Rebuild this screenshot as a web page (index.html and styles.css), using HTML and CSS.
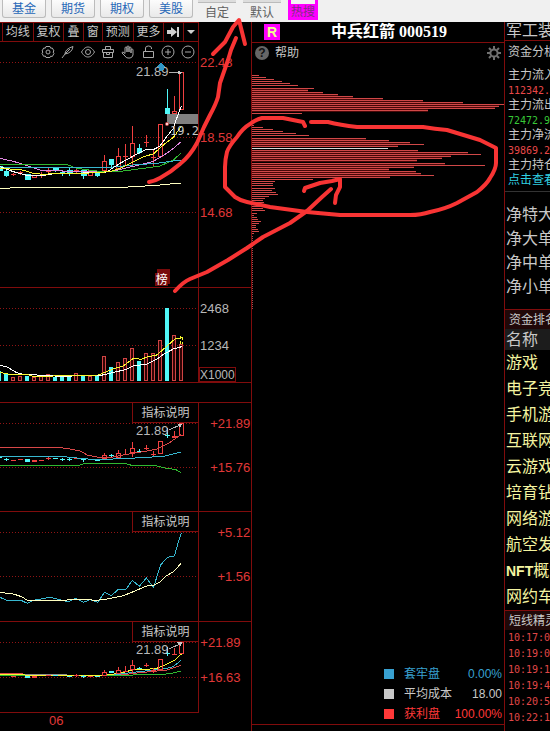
FILE: index.html
```html
<!DOCTYPE html>
<html lang="zh-CN">
<head>
<meta charset="utf-8">
<title>中兵红箭 000519</title>
<link rel="stylesheet" href="styles.css">
</head>
<body>
<nav class="topbar">
  <button class="tab">基金</button>
  <button class="tab">期货</button>
  <button class="tab">期权</button>
  <button class="tab">美股</button>
  <button class="tool">自定</button>
  <button class="tool">默认</button>
  <button class="hot">热搜</button>
</nav>
<main class="layout">
  <section class="charts">
    <div class="menu">
      <button class="wide">均线</button>
      <button class="wide">复权</button>
      <button>叠</button>
      <button>窗</button>
      <button class="wide">预测</button>
      <button class="wide">更多</button>
      <button aria-label="跳到末尾"><svg width="14" height="12" viewBox="0 0 14 12"><path d="M1 4h4V1l6 5-6 5V8H1zM11 1h2v10h-2z" fill="#d0d0d0"/></svg></button>
      <button class="drop" aria-label="展开"><svg width="8" height="5" viewBox="0 0 8 5"><path d="M0 0h8L4 4z" fill="#d0d0d0"/></svg></button>
    </div>
    <div class="icons">
      <svg viewBox="0 0 14 14"><path d="M5 1.500h4l.7 1.700 1.600-.2 1.700 3-1 1 1 1.500-1.700 3-1.700-.3L9 12.500H5l-.7-1.500-1.700.3-1.600-3L2 7 1 6l1.700-3 1.600.2z"/><circle cx="7" cy="7" r="2"/></svg>
      <svg viewBox="0 0 14 14"><path d="M1 13L4 9Q4 4 12 1.500Q11 8 4 9M4 9L9 4"/></svg>
      <svg viewBox="0 0 14 14"><path d="M.5 7C3 3 5 2 7 2s4 1 6.500 5C11 11 9 12 7 12S3 11 .5 7z"/><circle cx="7" cy="7" r="2.500"/></svg>
      <svg viewBox="0 0 14 14"><path d="M1.500 4.500h11v3h-11zM2.500 7.500v5h9v-5M4.500 4V1.500h5V4M5.500 7.500v2h3v-2"/></svg>
      <svg viewBox="0 0 14 14"><path d="M4 8.500V3q0-1 1-1t1 1v4V2q0-1 1-1t1 1v5V3q0-1 1-1t1 1v5V5q0-1 1-1t1 1v5q-1 3-3 3H7q-2 0-3-2L1 8q0-1 1-1z"/></svg>
      <svg viewBox="0 0 14 14"><path d="M2.500 6.500h10v6h-10zM4.500 6V3q0-2 3-2t3 2v1"/></svg>
      <svg viewBox="0 0 14 14"><circle cx="7" cy="7" r="6"/><path d="M4 7h6M7 4v6"/></svg>
      <svg viewBox="0 0 14 14"><circle cx="7" cy="7" r="6"/><path d="M4 7h6"/></svg>
    </div>

    <svg class="plot" viewBox="0 6 753 675">
      <path class="grid" d="M0 7H595M0 232H595M0 458H595"/>
      <path class="axis" d="M595.500 0V681"/>
      <path fill="#808080" d="M501 162h93v30h-93z"/>
      <g class="up">
        <path d="M40 338v10M33 343h14M61 333v12M54 338h14M96 347h14v6h-14zM124 336v18M117 345h14M145 324v14M139 330h13M139 333h13M229 324v14M222 331h14M264 331h14v14h-14zM264 338h14M307 303h12v29h-12zM313 285v18M349 289h12v36h-12zM355 264v25M376 252v66M369 290h14M391 250h12v40h-12zM397 198v52M397 290v25M439 225v36M432 246h14M460 268v50M453 293h14M475 193h13v97h-13zM517 154h13v6h-13zM523 108v46M538 38h13v111h-13z"/>
      </g>
      <g class="down">
        <path d="M0 320h6v12H0zM12 333h14v14H12zM75 343h15v14H75zM159 323h15v7h-15zM201 330h15v11h-15zM243 332h15v13h-15zM285 336h14v11h-14zM327 299h14v13h-14zM411 266h14v11h-14zM495 144h14v15h-14z"/>
        <path d="M19 330v20M166 330v6M187 335v13M181 338h13M208 324v23M250 330v27M292 336v14M334 296v26M418 252v30M502 87v75"/>
      </g>
      <polyline class="line pale" points="0,384 30,384 50,381 385,381 470,376 520,371 542,370"/>
      <polyline class="line violet" points="0,295 40,304 85,318 120,330 160,332 240,335 330,336 370,326 430,312 460,304 500,280 520,265 542,246"/>
      <polyline class="line green" points="0,313 200,313 230,325 290,333 370,333 430,325 480,318 520,300 542,280"/>
      <polyline class="line blue" points="0,322 330,322 400,315 470,310 542,300"/>
      <polyline class="line white" points="0,320 40,335 80,346 130,346 170,340 250,339 320,336 360,310 400,288 440,268 462,268 480,258 500,230 520,205 530,175 544,138"/>
      <polyline class="line yellow" points="0,326 60,328 100,340 130,343 170,340 250,340 330,335 360,325 390,310 430,290 460,282 490,255 520,232 545,198"/>
      <circle cx="501" cy="192" r="5" fill="#ffd0d0" stroke="#c03030" stroke-width="2"/>
      <text class="num gray" x="408" y="47">21.89</text>
      <path class="pointer" d="M508 38h30"/><path fill="#c8c8c8" d="M534 32l14 6-14 6z"/>
      <path fill="#3098c8" d="M484 8l13 13-6 1v7l-7 5-7-5v-7l-6-1z"/>
      <text class="mono" x="510" y="226">19.2</text>
      <text class="num red" x="600" y="21">22.48</text>
      <text class="num red" x="600" y="246">18.58</text>
      <text class="num red" x="600" y="472">14.68</text>
      <path fill="#780a0a" d="M471 627h39v45h-6v6h-39v-39h6z"/>
      <text class="cjk" x="467" y="672">榜</text>
    </svg>

    <div class="panel volume">
      <svg class="plot" viewBox="0 84 753 282">
        <path class="grid" d="M0 146H595M0 257H595"/>
        <path class="axis" d="M595.500 84V366"/>
        <path class="bars" d="M35 352h9v10h-9zM56 349h9v13h-9zM98 351h9v11h-9zM119 349h9v13h-9zM140 343h9v19h-9zM224 340h9v22h-9zM266 349h9v13h-9zM308 289h9v73h-9zM350 307h9v55h-9zM371 295h9v67h-9zM392 265h9v97h-9zM434 280h9v82h-9zM455 280h9v82h-9zM476 241h9v121h-9zM518 226h9v136h-9zM539 253h9v109h-9z"/>
        <path fill="#50f8f8" d="M0 333h3v30H0zM12 341h12v22H12zM75 347h12v16H75zM159 350h12v13h-12zM180 348h12v15h-12zM201 349h12v14h-12zM243 348h12v15h-12zM285 347h12v16h-12zM327 321h12v42h-12zM411 303h12v60h-12zM495 144h12v219h-12z"/>
        <polyline class="line white" points="0,316 20,320 50,338 75,344 100,344 130,347 200,349 250,346 295,348 350,335 380,328 400,318 440,312 470,298 490,283 520,267 545,260"/>
        <polyline class="line yellow" points="0,337 40,345 80,343 100,349 130,350 160,348 220,346 295,345 320,335 345,325 370,318 400,295 425,298 440,291 470,285 490,268 510,250 525,237 548,232"/>
        <path class="line yellow" stroke-dasharray="9 6" d="M540 228v24M547 232v20"/>
        <text class="num gray" x="600" y="159">2468</text>
        <text class="num gray" x="600" y="270">1234</text>
        <path class="axis" d="M598 322h108v42H598z"/>
        <text class="num small gray" x="600" y="356">X1000</text>
      </svg>
    </div>

    <div class="panel">
      <button class="note">指标说明</button>
      <svg class="plot" viewBox="0 24 753 324">
        <path class="grid" d="M0 85H595M0 217H595"/>
        <path class="axis" d="M595.500 24V348"/>
        <path class="up" d="M33 196h14M54 193h14M96 196h14M96 199h14M117 196h14M138 190h14M145 185v9M222 190h14M264 194h14M307 181h12v9h-12zM313 175v6M349 174h12v12h-12zM355 165v9M355 186v4M369 178h14M376 163v17M391 160h12v13h-12zM397 141v19M397 173v14M432 160h14M439 150v16M453 178h14M460 168v18M475 139h13v36h-13zM516 124h14M516 127h14M523 108v22M538 85h13v36h-13z"/>
        <path class="down" d="M0 188h6M12 192h14M19 189v9M75 194h15M75 197h15M75 200h15M159 190h14M180 193h14M187 190v9M201 193h14M208 189v10M243 193h14M250 190v12M285 195h14M327 182h14M334 177v10M411 168h14M418 162v12M495 122h14M502 98v32"/>
        <polyline class="line coral" points="0,157 175,157 205,161 240,168 262,180 290,186 340,186 380,178 430,170 470,162 510,142 544,118"/>
        <polyline class="line blue" points="0,185 180,184 240,190 290,194 390,190 490,184 544,171"/>
        <polyline class="line green" points="0,211 235,211 262,204 370,204 395,211 470,213 495,219 528,224 543,233"/>
        <text class="num gray" x="408" y="119">21.89</text>
        <path class="pointer" d="M508 104l30-13"/><path fill="#c8c8c8" d="M532 86h15l-6 12z"/>
        <text class="num red end" x="751" y="99">+21.89</text>
        <text class="num red end" x="751" y="231">+15.76</text>
      </svg>
    </div>

    <div class="panel">
      <button class="note">指标说明</button>
      <svg class="plot" viewBox="0 21 753 327">
        <path class="grid" d="M0 82H595M0 214H595"/>
        <path class="axis" d="M595.500 21V348"/>
        <polyline class="line blue" points="0,277 20,286 65,287 82,295 100,286 150,277 205,290 228,280 250,292 270,284 294,292 313,262 334,272 355,253 378,253 397,226 418,244 439,219 461,247 472,210 482,180 502,157 523,153 533,118 544,85"/>
        <polyline class="line pale" points="0,262 40,267 65,275 82,286 180,287 230,282 290,286 320,282 370,272 400,260 440,243 462,240 480,231 500,212 523,198 543,175"/>
        <text class="num red end" x="751" y="96">+5.12</text>
        <text class="num red end" x="751" y="228">+1.56</text>
      </svg>
    </div>

    <div class="panel">
      <button class="note">指标说明</button>
      <svg class="plot" viewBox="0 21 753 270">
        <path class="grid" d="M0 82H595M0 187H595"/>
        <path class="axis" d="M595.500 21V291"/>
        <path class="line" stroke="#909090" d="M70 178h130M70 181h130"/>
        <polyline class="line green" points="0,182 310,183 400,180 490,178 520,174 544,168"/>
        <path class="line coral" d="M0 175h70M200 181h40"/>
        <polyline class="line coral" points="360,180 430,172 500,165 544,151"/>
        <polyline class="line blue" points="340,180 400,172 490,162 520,155 544,135"/>
        <polyline class="line yellow" points="0,179 60,179 100,182 300,182 360,175 400,164 450,162 470,160 500,148 525,135 544,117"/>
        <path class="up" d="M33 184h14M96 184h14M96 187h14M138 181h14M222 182h14M229 178v9M264 184h14M307 171h12v9h-12zM313 165v6M349 165h12v10h-12zM355 156v9M369 168h14M376 153v19M391 150h12v13h-12zM397 135v15M397 163v12M432 151h14M439 145v12M453 167h14M460 160v14M475 133h13v31h-13zM516 118h14M523 100v18M538 82h13v34h-13z"/>
        <path class="down" d="M75 184h15M75 187h15M159 180h14M201 183h14M243 184h14M250 180v9M285 184h14M327 169h14M327 172h14M411 160h14M418 155v8M495 116h14M502 96v26"/>
        <text class="num gray" x="408" y="117">21.89</text>
        <path class="pointer" d="M508 101l30-13"/><path fill="#c8c8c8" d="M532 82h15l-6 12z"/>
        <text class="num red" x="601" y="96">+21.89</text>
        <text class="num red" x="601" y="201">+16.63</text>
      </svg>
    </div>
    <footer class="dates"><span>06</span></footer>
  </section>

  <section class="chips">
    <header class="stock"><span class="badge">R</span><h1>中兵红箭 000519</h1></header>
    <div class="help">
      <span class="mark">?</span><span>帮助</span>
      <svg class="gear" width="14" height="14" viewBox="0 0 14 14"><circle cx="7" cy="7" r="3.600"/><path d="M7 0v3M7 11v3M0 7h3M11 7h3M2 2l2 2M10 10l2 2M2 12l2-2M10 4l2-2"/></svg>
    </div>
    <svg class="histogram" viewBox="96 8.500 756 741" preserveAspectRatio="none">
      <path class="shade" d="M96 88H264M96 94H264M96 100H308M96 106H353M96 112H398M96 118H488M96 124H608M96 130H728M96 136H836M96 142H825M96 148H623M96 154H623M96 238H437M96 244H506M96 250H569M96 256H533M96 274H593M96 280H743M96 286H692M96 292H665M96 298H590M96 304H590M96 313H674M96 319H581M96 325H506M96 331H506M96 337H587M96 343H602M96 349H509"/>
      <path class="rows" d="M96 46H117M96 52H137M96 58H161M96 64H185M96 70H209M96 76H233M96 85H281M96 91H264M96 97H308M96 103H353M96 109H398M96 115H488M96 121H608M96 127H728M96 133H852M96 139H836M96 145H825M96 151H623M96 160H245M96 196H102M96 202H128M96 208H158M96 214H188M96 220H227M96 226H266M96 235H437M96 241H506M96 247H569M96 253H611M96 259H533M96 271H593M96 277H743M96 283H782M96 289H692M96 295H665M96 301H590M96 310H674M96 316H794M96 322H581M96 328H506M96 334H587M96 340H602M96 346H641M96 352H509M96 358H278M96 364H164M96 370H158M96 376H158M96 385H164M96 391H155M96 397H167M96 403H173M96 409H146M96 415H134M96 421H128M96 427H131M96 433H122M96 439H145M96 445H128M96 451H134M96 460H110M96 466H101M96 472H110M96 478H113M96 484H122M96 490H116M96 496H107M96 502H107M96 508H113M96 514H116M96 520H101"/>
      <path stroke="#d8d8d8" stroke-width="3" d="M96 265H503"/>
      <path stroke="#a05050" stroke-width="3" stroke-dasharray="3 3" d="M97.500 526V746"/>
    </svg>
    <dl class="legend">
      <div class="trapped"><dt>套牢盘</dt><dd>0.00%</dd></div>
      <div class="cost"><dt>平均成本</dt><dd>18.00</dd></div>
      <div class="profit"><dt>获利盘</dt><dd>100.00%</dd></div>
    </dl>
  </section>

  <aside class="side">
    <h2 class="sector">军工装</h2>
    <h3 class="caption">资金分析</h3>
    <dl class="flow">
      <dt>主力流入</dt><dd class="in">112342.</dd>
      <dt>主力流出</dt><dd class="out">72472.9</dd>
      <dt>主力净流</dt><dd class="in">39869.2</dd>
      <dt>主力持仓</dt>
    </dl>
    <a class="more" href="#">点击查看</a>
    <ul class="orders"><li>净特大</li><li>净大单</li><li>净中单</li><li>净小单</li></ul>
    <h3 class="band">资金排名</h3>
    <table class="rank">
      <thead><tr><th>名称</th></tr></thead>
      <tbody>
        <tr><td>游戏</td></tr><tr><td>电子竞</td></tr><tr><td>手机游</td></tr><tr><td>互联网</td></tr><tr><td>云游戏</td></tr>
        <tr><td>培育钻</td></tr><tr><td>网络游</td></tr><tr><td>航空发</td></tr><tr><td><b>NFT</b>概念</td></tr><tr><td>网约车</td></tr>
      </tbody>
    </table>
    <h3 class="band">短线精灵</h3>
    <ol class="times"><li>10:17:0</li><li>10:19:0</li><li>10:19:1</li><li>10:19:4</li><li>10:20:5</li><li>10:22:1</li></ol>
  </aside>
</main>
<svg class="marker" viewBox="0 0 550 731" preserveAspectRatio="none" aria-hidden="true">
  <path d="M149 182Q155 181 160 178Q171 172 180 164Q190 156 197 143L204 127L210 115Q216 104 218 97L220 83L228 60L231 50L236 38"/>
  <path d="M213 54L225 42L233 27L239 20L242 32L245 44"/>
  <path d="M175 291Q183 282 190 279L207 272L228 260L247 248L263 237L290 223L307 211L322 197L331 189"/>
  <path d="M304 191L305 188L320 183L332 181L340 179L340 187L336 195L335 203"/>
  <path d="M305 126L303 122L283 118H262Q255 120 250 124Q243 128 237 137Q229 146 227 152Q225 160 225 167V187L235 197Q241 201 247 202L270 207L307 212L340 215H410Q421 215 430 212Q445 209 457 203L477 192Q487 184 490 178Q496 169 496 163V148L480 140L447 130Q435 129 423 127H357Q340 125 328 122H311"/>
</svg>
</body>
</html>
```
FILE: styles.css
```css
* { box-sizing: border-box; }
body {
  margin: 0;
  min-height: 100vh;
  position: relative;
  overflow-x: hidden;
  display: flex;
  flex-direction: column;
  background: #000;
  color: #c8c8c8;
  font: 12px/16px "Liberation Sans", "Noto Sans CJK SC", sans-serif;
}
button { font: inherit; color: inherit; padding: 0; margin: 0; border: 0; background: none; white-space: nowrap; }
h1, h2, h3, dl, dd, ul, ol { margin: 0; padding: 0; font-weight: normal; list-style: none; }
svg { display: block; overflow: visible; }

.topbar { display: flex; align-items: flex-start; height: 22px; padding-left: 2px; background: #f0f0f0; }
.tab {
  width: 44px; height: 18px; margin-right: 5px;
  border: 1px solid #bcbcbc; border-top: 0; border-radius: 0 0 3px 3px;
  background: linear-gradient(#fcfcfc, #e9e9e9);
  color: #2868b8;
}
.tool {
  width: 38px; height: 22px; margin-right: 7px; padding-top: 4px;
  background: linear-gradient(#bbb, #bbb) 0 2px / 100% 1px no-repeat, linear-gradient(#ddd, #ddd) 0 0 / 100% 2px no-repeat;
  color: #606060;
}
.hot {
  width: 30px; height: 20px; padding-top: 4px;
  background: linear-gradient(#f4f4f4, #f4f4f4) 50% 0 / 24px 4px no-repeat #f0f;
  color: #803080;
}

.layout { flex: 1; display: grid; grid-template-columns: 251px minmax(0, 1fr) 46px; }

.menu { display: flex; width: 199px; height: 20px; padding-left: 2px; border: solid #800c0c; border-width: 1px 1px 1px 0; }
.menu button { flex: 19 0 0; border-left: 1px solid #800c0c; display: flex; align-items: center; justify-content: center; }
.menu .wide { flex-grow: 31; }
.menu .drop { flex-grow: 15; }
.icons { display: flex; align-items: center; gap: 6px; width: 199px; height: 20px; padding-left: 41px; border-right: 1px solid #800c0c; }
.icons svg { width: 14px; height: 14px; fill: none; stroke: #a8a8a8; }

.plot { width: 100%; height: auto; }
.plot path, .plot polyline { shape-rendering: crispEdges; }
.grid { stroke: #901414; stroke-width: 3; stroke-dasharray: 3 6; fill: none; }
.axis { stroke: #800c0c; stroke-width: 3; fill: none; }
.up { stroke: #f04040; stroke-width: 3; fill: none; }
.down { stroke: #50f8f8; stroke-width: 3; fill: #50f8f8; }
.bars { stroke: #d04444; stroke-width: 3; fill: #300404; }
.line { stroke-width: 3; fill: none; }
.white { stroke: #fff; }
.yellow { stroke: #f8f830; }
.pale { stroke: #ffffc0; }
.violet { stroke: #e088e0; }
.green { stroke: #30b830; }
.blue { stroke: #38b8d0; }
.coral { stroke: #d84848; }
.pointer { stroke: #b0b0b0; stroke-width: 3; }
.num { font-size: 39px; }
.small { font-size: 36px; }
.gray { fill: #b8b8b8; }
.red { fill: #e03838; }
.end { text-anchor: end; }
.mono { font: 36px "DejaVu Sans Mono", monospace; fill: #c8c8c8; }
.cjk { font-size: 36px; fill: #fff; }

.panel { position: relative; border-top: 1px solid #800c0c; }
.volume { border-bottom: 1px solid #800c0c; margin-bottom: 19px; }
.note { position: absolute; top: 0; left: 132px; width: 66px; height: 20px; border: solid #800c0c; border-width: 0 0 1px 1px; background: #000; }
.dates { width: 199px; height: 19px; padding-left: 49px; border-top: 1px solid #800c0c; color: #e03838; font-size: 13px; }
.dates span { display: block; }

.chips { display: flex; flex-direction: column; border-left: 1px solid #800c0c; }
.stock { display: flex; align-items: center; height: 21px; padding-left: 12px; border-bottom: 1px solid #800c0c; }
.badge { width: 16px; height: 16px; background: #f0f; color: #f0ff90; font-weight: bold; font-size: 14px; text-align: center; }
.stock h1 { flex: 1; padding-right: 6px; text-align: center; color: #fff; font: bold 16px/20px "Liberation Serif", "Noto Sans CJK SC", serif; white-space: nowrap; }
.help { display: flex; align-items: center; height: 20px; padding: 0 3px; gap: 6px; }
.mark { width: 14px; height: 14px; border-radius: 50%; background: #666; color: #111; font-weight: bold; line-height: 14px; text-align: center; }
.gear { margin-left: auto; fill: none; stroke: #707070; stroke-width: 2; }
.histogram { width: 100%; height: 247px; }
.histogram path { shape-rendering: crispEdges; }
.rows { stroke: #d04848; stroke-width: 3; }
.shade { stroke: #480808; stroke-width: 3; }
.legend { margin-top: auto; margin-bottom: 6px; border-bottom: 1px solid #800c0c; padding-left: calc(100% - 120px); }
.legend div { display: flex; align-items: center; height: 20px; gap: 10px; padding-right: 2px; white-space: nowrap; }
.legend div::before { content: ""; width: 10px; height: 10px; background: currentColor; }
.legend dd { margin-left: auto; }
.trapped { color: #38a0d0; }
.cost { color: #c8c8c8; }
.profit { color: #ff3838; }

.side { border-left: 1px solid #800c0c; overflow: hidden; white-space: nowrap; }
.sector { height: 19px; padding-left: 1px; border-bottom: 1px solid #800c0c; font-size: 16px; line-height: 18px; }
.caption { padding: 3px 0 0 3px; font-size: 12px; }
.flow { padding: 8px 0 0 3px; line-height: 15px; }
.flow dd { font: 10px/15px "DejaVu Sans Mono", monospace; }
.in { color: #e84848; }
.out { color: #38c838; }
.more { display: block; height: 19px; padding-left: 3px; border-bottom: 1px solid #333; color: #30d0e0; line-height: 14px; text-decoration: none; }
.orders { padding: 11px 0 10px 1px; font-size: 16px; line-height: 24px; }
.band { height: 20px; padding-left: 4px; border-top: 1px solid #800c0c; background: #200808; font-size: 12px; line-height: 20px; }
.rank { width: 100%; border-collapse: collapse; font-size: 16px; }
.rank th { height: 21px; padding: 0 1px; background: #1c1c1c; font-weight: normal; text-align: left; line-height: 20px; }
.rank td { height: 26px; padding: 0 1px; color: #f4f4a0; line-height: 26px; }
.rank b { font-size: 14px; }
.times { padding: 0 0 0 3px; color: #e04848; font: 10px/16px "DejaVu Sans Mono", monospace; }

.marker { position: absolute; top: 0; left: 0; width: 100%; height: 100%; pointer-events: none; fill: none; stroke: #f83434; stroke-width: 4; stroke-linecap: round; stroke-linejoin: round; }
```
